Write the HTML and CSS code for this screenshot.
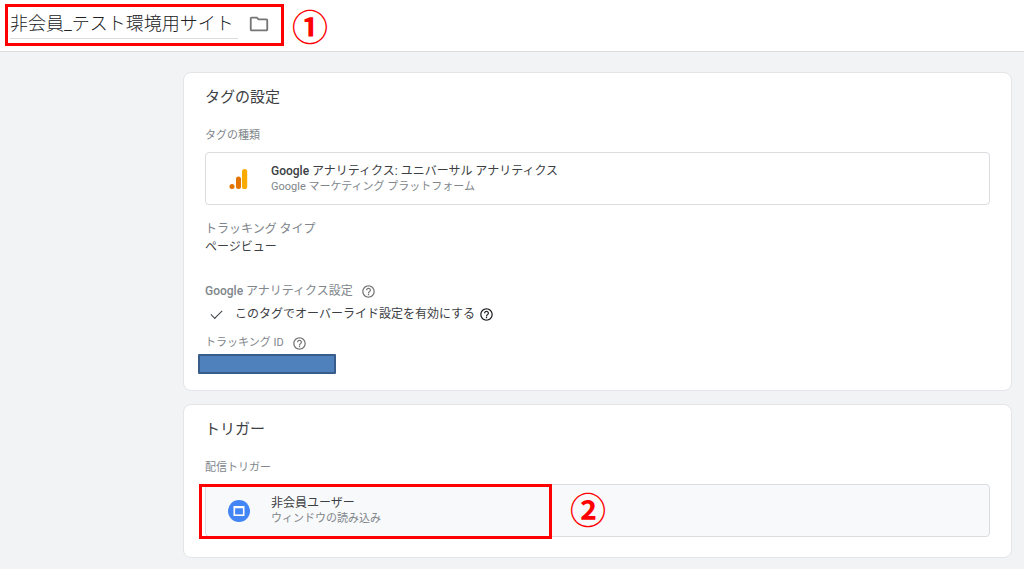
FILE: index.html
```html
<!DOCTYPE html>
<html lang="ja">
<head>
  <meta charset="UTF-8">
  <meta name="viewport" content="width=device-width, initial-scale=1">
  <title>非会員_テスト環境用サイト</title>
  <link rel="stylesheet" href="styles.css">
</head>
<body>
  <header class="topbar">
    <div class="title-group">
      <input class="title-input" type="text" value="非会員_テスト環境用サイト" aria-label="タグ名">
      <button class="icon-button" type="button" aria-label="フォルダ">
        <svg width="22" height="22" viewBox="0 0 24 24"><path d="M9.17 6l2 2H20v10H4V6h5.17M10 4H4c-1.1 0-1.99.9-1.99 2L2 18c0 1.1.9 2 2 2h16c1.1 0 2-.9 2-2V8c0-1.1-.9-2-2-2h-8l-2-2z"/></svg>
      </button>
    </div>
    <span class="mark">①</span>
  </header>

  <main class="content">
    <section class="card">
      <h2 class="card-title">タグの設定</h2>
      <h3 class="label">タグの種類</h3>
      <button class="entry" type="button">
        <svg width="24" height="24" viewBox="0 0 24 24">
          <circle cx="5" cy="19.5" r="2.5" fill="#e37400"/>
          <rect x="9" y="9.5" width="5" height="12.5" rx="2.5" fill="#e37400"/>
          <rect x="15" y="2" width="5.2" height="20" rx="2.6" fill="#f9ab00"/>
        </svg>
        <span class="entry-text">
          <span class="entry-name"><span class="brand">Google</span> アナリティクス: ユニバーサル アナリティクス</span>
          <span class="entry-sub">Google マーケティング プラットフォーム</span>
        </span>
      </button>

      <div class="field">
        <h3 class="label label-large">トラッキング タイプ</h3>
        <p class="value">ページビュー</p>
      </div>

      <div class="field">
        <h3 class="label label-large">
          <span><span class="brand">Google</span> アナリティクス設定</span>
          <button class="icon-button" type="button" aria-label="ヘルプ">
            <svg width="15" height="15" viewBox="0 0 24 24"><use href="#help"/></svg>
          </button>
        </h3>
        <div class="check-row">
          <input class="check" type="checkbox" id="override" checked>
          <label for="override">このタグでオーバーライド設定を有効にする</label>
          <button class="icon-button dark" type="button" aria-label="ヘルプ">
            <svg width="15" height="15" viewBox="0 0 24 24"><use href="#help"/></svg>
          </button>
        </div>
        <h3 class="label">トラッキング ID
          <button class="icon-button" type="button" aria-label="ヘルプ">
            <svg width="15" height="15" viewBox="0 0 24 24"><use href="#help"/></svg>
          </button>
        </h3>
        <div class="masked-id"></div>
      </div>
    </section>

    <section class="card">
      <h2 class="card-title">トリガー</h2>
      <h3 class="label">配信トリガー</h3>
      <div class="trigger">
        <button class="entry entry-shaded" type="button">
          <svg width="24" height="24" viewBox="0 0 24 24">
            <circle cx="12" cy="12" r="11" fill="#4285f4"/>
            <rect x="7.3" y="7.8" width="9.4" height="8.4" fill="none" stroke="#fff" stroke-width="1.6"/>
            <path d="M7 8.3h10" stroke="#fff" stroke-width="2"/>
          </svg>
          <span class="entry-text">
            <span class="entry-name">非会員ユーザー</span>
            <span class="entry-sub">ウィンドウの読み込み</span>
          </span>
        </button>
        <div class="highlight"><span class="mark">②</span></div>
      </div>
    </section>
  </main>

  <svg class="symbols" width="0" height="0">
    <symbol id="help" viewBox="0 0 24 24"><path d="M11 18h2v-2h-2v2zm1-16C6.48 2 2 6.48 2 12s4.48 10 10 10 10-4.48 10-10S17.52 2 12 2zm0 18c-4.41 0-8-3.59-8-8s3.59-8 8-8 8 3.59 8 8-3.59 8-8 8zm0-14c-2.21 0-4 1.79-4 4h2c0-1.1.9-2 2-2s2 .9 2 2c0 2-3 1.75-3 5h2c0-2.25 3-2.5 3-5 0-2.21-1.79-4-4-4z"/></symbol>
  </svg>
</body>
</html>
```

FILE: styles.css
```css
* {
  box-sizing: border-box;
}
body {
  margin: 0;
  background: #f1f3f4;
  color: #3c4043;
  font-family: Roboto, "Noto Sans CJK JP", sans-serif;
  font-size: 12px;
}
h2, h3, p {
  margin: 0;
  font-weight: 400;
}
button, input {
  font: inherit;
  color: inherit;
}

/* top bar */
.topbar {
  display: flex;
  align-items: flex-start;
  gap: 8px;
  height: 52px;
  padding: 4px 5px;
  background: #fff;
  border-bottom: 1px solid #dadce0;
}
.title-group {
  display: flex;
  align-items: center;
  gap: 10px;
  width: 279px;
  height: 42px;
  padding: 0 2px 2px;
  border: 3px solid #f00;
}
.title-input {
  width: 228px;
  height: 30px;
  padding: 0 0 4px;
  border: 0;
  border-bottom: 1px solid #dadce0;
  background: none;
  color: #202124;
  font-size: 18px;
  font-weight: 300;
}
.icon-button {
  display: flex;
  padding: 0;
  border: 0;
  background: none;
  fill: #757575;
  cursor: pointer;
}
.icon-button.dark {
  fill: #202124;
}
.mark {
  color: #f00;
  font-family: "Noto Sans CJK JP", sans-serif;
  font-size: 36px;
  font-weight: 700;
  line-height: 42px;
}

/* cards */
.content {
  display: flex;
  flex-direction: column;
  gap: 13px;
  padding: 20px 12px 11px 183px;
}
.card {
  padding: 14px 21px 16px;
  background: #fff;
  border: 1px solid #e3e5e8;
  border-radius: 8px;
}
.card-title {
  font-size: 15px;
  line-height: 20px;
}
.label {
  display: flex;
  align-items: center;
  gap: 8px;
  color: #80868b;
  font-size: 11px;
  line-height: 18px;
}
.card-title + .label {
  margin: 20px 0 7px;
}
.label-large {
  font-size: 12px;
}
.brand {
  font-weight: 500;
}
.entry {
  display: flex;
  align-items: center;
  gap: 20px;
  width: 100%;
  height: 53px;
  padding: 0 21px;
  background: #fff;
  border: 1px solid #dadce0;
  border-radius: 4px;
  text-align: left;
  cursor: pointer;
}
.entry-shaded {
  background: #f8f9fa;
}
.entry-text {
  display: flex;
  flex-direction: column;
  line-height: 16px;
}
.entry-name {
  font-size: 12px;
}
.entry-sub {
  color: #80868b;
  font-size: 11px;
}
.field {
  margin-top: 15px;
}
.field + .field {
  margin-top: 26px;
}
.value {
  line-height: 18px;
}
.check-row {
  display: flex;
  align-items: center;
  gap: 4px;
  margin: 4px 0 10px;
  padding-left: 4px;
  line-height: 20px;
}
.check {
  appearance: none;
  display: flex;
  justify-content: center;
  width: 14px;
  height: 14px;
  margin: 0 8px 0 0;
}
.check:checked::before {
  content: "";
  width: 10px;
  height: 5px;
  border: solid #3c4043;
  border-width: 0 0 1px 1px;
  transform: translateY(3px) rotate(-45deg);
}
.masked-id {
  width: 138px;
  height: 20px;
  margin: 2px 0 0 -7px;
  background: #4f81bd;
  border: 2px solid #385d8a;
  border-radius: 1px;
}

/* red frame over the trigger row */
.trigger {
  position: relative;
  margin-bottom: 4px;
}
.highlight {
  position: absolute;
  top: 0;
  left: -6px;
  display: flex;
  align-items: flex-start;
  width: 353px;
  height: 55px;
  border: 3px solid #f00;
  pointer-events: none;
}
.highlight .mark {
  margin-left: 368px;
}
.symbols {
  position: absolute;
}
```
